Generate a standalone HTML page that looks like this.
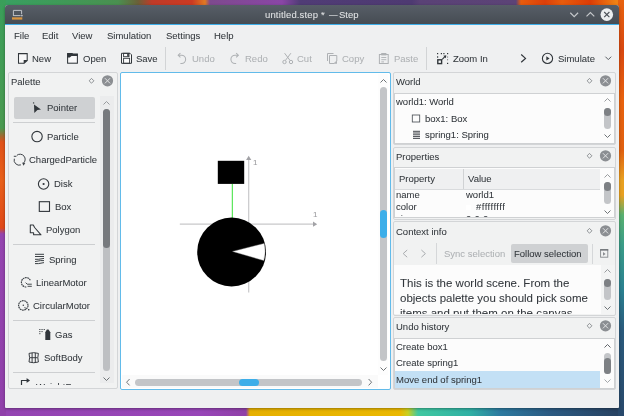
<!DOCTYPE html><html><head><meta charset="utf-8"><style>
html,body{margin:0;padding:0;width:624px;height:416px;overflow:hidden;background:#5a4378}
body{position:relative;font-family:"Liberation Sans",sans-serif}
.t{position:absolute;white-space:pre;line-height:0;font-family:"Liberation Sans",sans-serif;-webkit-font-smoothing:antialiased;will-change:transform;-webkit-text-stroke:0.05px currentColor}
svg{overflow:visible}
</style></head><body>
<div style="position:absolute;left:0px;top:0px;width:624px;height:6px;background:linear-gradient(to right,#38a062 0px,#3f9a58 60px,#4a9050 118px,#6a6038 138px,#c03a28 152px,#cc3a22 192px,#e07a22 205px,#7e4a8e 210px,#8a46a6 282px,#503c76 300px,#4e3a72 412px,#5a4276 420px,#5c4377 516px,#e85c0c 521px,#dc3f0a 545px,#e85c0c 562px,#dc3c06 590px,#f08214 616px)"></div>
<div style="position:absolute;left:0px;top:407px;width:624px;height:9px;background:linear-gradient(to right,#9444b2 0px,#9846b8 200px,#9040a8 246px,#e6b000 250px,#eab800 400px,#c8d020 408px,#40c8a0 418px,#2fb0a4 470px,#2c7aa0 500px,#2b5a82 550px,#27405f 624px)"></div>
<div style="position:absolute;left:0px;top:0px;width:6px;height:416px;background:linear-gradient(#3a9f5a 0px,#4a9a50 128px,#a06a30 136px,#e05018 142px,#e8601a 180px,#e04818 228px,#9444b0 234px,#9040aa 416px)"></div>
<div style="position:absolute;left:618px;top:0px;width:6px;height:416px;background:linear-gradient(#e8620e 0px,#d84810 50px,#e8620e 100px,#e06010 150px,#e8a020 180px,#e8a020 195px,#58b070 215px,#3a9c88 245px,#2a8090 290px,#2a5a7c 330px,#28486a 416px)"></div>
<div style="position:absolute;left:5px;top:5px;width:614px;height:403px;background:#eff0f1;border-radius:3px 3px 1px 1px;overflow:hidden;box-shadow:0 1px 3px rgba(0,0,0,.35)">
<div style="position:absolute;left:0;top:0;width:614px;height:19px;background:linear-gradient(#575e67,#464c53)"></div>
<div style="position:absolute;left:0;top:19px;width:614px;height:1px;background:#3daee9"></div>
</div>
<svg style="position:absolute;left:10px;top:8px;" width="15" height="14" viewBox="10 8 15 14"><path d="M13.4 16 V10.4 H21.6 V14.2 M13.4 15.6 H20.6" fill="none" stroke="#bfc2c6" stroke-width="1"/><circle cx="21.9" cy="15.6" r="0.9" fill="#bfc2c6"/><rect x="12" y="17.3" width="10.3" height="2.3" fill="#d89540"/></svg>
<div class="t" style="left:265.00px;top:15.00px;font-size:9.5px;color:#e2e4e6;letter-spacing:0.15px">untitled.step</div>
<div class="t" style="left:320.60px;top:15.00px;font-size:9.5px;color:#e2e4e6;">*</div>
<div class="t" style="left:328.60px;top:15.00px;font-size:9.5px;color:#e2e4e6;transform:scaleX(0.92);transform-origin:0 0">—</div>
<div class="t" style="left:339.30px;top:15.00px;font-size:9.5px;color:#e2e4e6;">Step</div>
<svg style="position:absolute;left:566px;top:8px;" width="54" height="14" viewBox="566 8 54 14"><polyline points="570.3,12.8 574.2,16.6 578.1,12.8" fill="none" stroke="#c5c8cb" stroke-width="1.2"/><polyline points="586.5,16.4 590.4,12.6 594.3,16.4" fill="none" stroke="#c5c8cb" stroke-width="1.2"/><circle cx="606.8" cy="14.6" r="6.3" fill="#eceeef"/><path d="M604.2 12 L609.4 17.2 M609.4 12 L604.2 17.2" stroke="#4b5157" stroke-width="1.1"/></svg>
<div class="t" style="left:14.40px;top:36.00px;font-size:9.5px;color:#31363b;">File</div>
<div class="t" style="left:42.00px;top:36.00px;font-size:9.5px;color:#31363b;">Edit</div>
<div class="t" style="left:72.40px;top:36.00px;font-size:9.5px;color:#31363b;">View</div>
<div class="t" style="left:107.00px;top:36.00px;font-size:9.5px;color:#31363b;">Simulation</div>
<div class="t" style="left:166.00px;top:36.00px;font-size:9.5px;color:#31363b;">Settings</div>
<div class="t" style="left:213.60px;top:36.00px;font-size:9.5px;color:#31363b;">Help</div>
<svg style="position:absolute;left:16px;top:51px;" width="14" height="15" viewBox="16 51 14 15"><path d="M18.5 53.6 H27.2 V60.4 L24.1 63.3 H18.5 Z" fill="#f8f8f9" stroke="#31363b" stroke-width="1.05"/><path d="M23.7 60.1 H27.6 L23.7 63.8 Z" fill="#31363b"/></svg>
<div class="t" style="left:32.30px;top:59.00px;font-size:9.5px;color:#31363b;">New</div>
<svg style="position:absolute;left:65px;top:51px;" width="15" height="15" viewBox="65 51 15 15"><rect x="67.6" y="54" width="9.8" height="9.2" fill="#f8f8f9" stroke="#31363b" stroke-width="1.05"/><path d="M67.1 53.1 H72.3 L73.1 54 H77.9 V55.9 H71.5 L69.8 57.6 H67.1 Z" fill="#31363b"/></svg>
<div class="t" style="left:82.90px;top:59.00px;font-size:9.5px;color:#31363b;">Open</div>
<svg style="position:absolute;left:119px;top:51px;" width="15" height="15" viewBox="119 51 15 15"><path d="M121.5 53.3 H130 L131.5 54.8 V63.3 H121.5 Z" fill="#fcfcfc" stroke="#31363b" stroke-width="1"/><rect x="123.6" y="53.3" width="5.4" height="3.4" fill="none" stroke="#31363b" stroke-width="0.9"/><rect x="127.2" y="53.6" width="1.6" height="2.8" fill="#31363b"/><rect x="123.6" y="58.3" width="6" height="5" fill="none" stroke="#31363b" stroke-width="0.9"/></svg>
<div class="t" style="left:136.10px;top:59.00px;font-size:9.5px;color:#31363b;">Save</div>
<div style="position:absolute;left:165px;top:47px;width:1px;height:23px;background:#d2d4d6"></div>
<svg style="position:absolute;left:175px;top:51px;" width="14" height="15" viewBox="175 51 14 15"><path d="M178.6 55.2 H181.5 A4.15 4.15 0 0 1 181.5 63.5 H180.4" fill="none" stroke="#aeb1b4" stroke-width="1.05"/><polyline points="180.4,53.1 178.2,55.2 180.4,57.3" fill="none" stroke="#aeb1b4" stroke-width="1.05"/></svg>
<div class="t" style="left:192.30px;top:59.00px;font-size:9.5px;color:#aeb1b4;">Undo</div>
<svg style="position:absolute;left:228px;top:51px;" width="14" height="15" viewBox="228 51 14 15"><path d="M238 55.2 H235.05 A4.15 4.15 0 0 0 235.05 63.5 H236.15" fill="none" stroke="#aeb1b4" stroke-width="1.05"/><polyline points="236.15,53.1 238.35,55.2 236.15,57.3" fill="none" stroke="#aeb1b4" stroke-width="1.05"/></svg>
<div class="t" style="left:245.20px;top:59.00px;font-size:9.5px;color:#aeb1b4;">Redo</div>
<svg style="position:absolute;left:280px;top:51px;" width="16" height="15" viewBox="280 51 16 15"><path d="M284.6 53.2 L290 60.4 M290.9 53.2 L285.4 60.4" stroke="#aeb1b4" stroke-width="1"/><circle cx="284.5" cy="62" r="1.7" fill="none" stroke="#aeb1b4" stroke-width="1"/><circle cx="291" cy="62" r="1.7" fill="none" stroke="#aeb1b4" stroke-width="1"/></svg>
<div class="t" style="left:297.40px;top:59.00px;font-size:9.5px;color:#aeb1b4;">Cut</div>
<svg style="position:absolute;left:325px;top:51px;" width="14" height="15" viewBox="325 51 14 15"><path d="M327.5 61 V53.5 H333.5" fill="none" stroke="#aeb1b4" stroke-width="1"/><path d="M329.5 55.5 H336.8 V61 L334 63.5 H329.5 Z" fill="none" stroke="#aeb1b4" stroke-width="1"/><path d="M337 60.8 V63.8 H334 Z" fill="#aeb1b4"/></svg>
<div class="t" style="left:342.40px;top:59.00px;font-size:9.5px;color:#aeb1b4;">Copy</div>
<svg style="position:absolute;left:377px;top:51px;" width="14" height="15" viewBox="377 51 14 15"><rect x="379.4" y="54.5" width="8.8" height="9" fill="none" stroke="#aeb1b4" stroke-width="1"/><rect x="381.2" y="53" width="5.2" height="2.4" fill="#aeb1b4"/><path d="M381.3 57.5 H386.3 M381.3 59.7 H386.3 M381.3 61.9 H384" stroke="#aeb1b4" stroke-width="0.9"/></svg>
<div class="t" style="left:393.60px;top:59.00px;font-size:9.5px;color:#aeb1b4;">Paste</div>
<div style="position:absolute;left:426px;top:47px;width:1px;height:23px;background:#d2d4d6"></div>
<svg style="position:absolute;left:435px;top:51px;" width="16" height="15" viewBox="435 51 16 15"><g fill="#31363b"><rect x="437" y="53" width="1.2" height="1.2"/><rect x="440.8" y="53" width="1.2" height="1.2"/><rect x="443.3" y="53" width="1.2" height="1.2"/><rect x="447" y="53" width="1.2" height="1.2"/><rect x="437" y="56.3" width="1.2" height="1.4"/><rect x="447" y="56.5" width="1.1" height="1.1" opacity=".6"/><rect x="447" y="59.2" width="1.1" height="1.1" opacity=".6"/><rect x="447" y="62.8" width="1.2" height="1.2"/><path d="M446.3 55.3 L445.9 58.3 L443.3 55.7 Z"/></g><rect x="437.8" y="59.8" width="3.8" height="3.8" fill="#f4f5f5" stroke="#31363b" stroke-width="1.4"/><path d="M442.2 59.4 L444.9 56.7" stroke="#31363b" stroke-width="1.1"/></svg>
<div class="t" style="left:453.20px;top:59.00px;font-size:9.5px;color:#31363b;">Zoom In</div>
<svg style="position:absolute;left:518px;top:52px;" width="10" height="12" viewBox="518 52 10 12"><polyline points="521.2,54.5 525.5,58.4 521.2,62.3" fill="none" stroke="#31363b" stroke-width="1.2"/></svg>
<svg style="position:absolute;left:540px;top:51px;" width="15" height="15" viewBox="540 51 15 15"><circle cx="547.5" cy="58.4" r="5.1" fill="none" stroke="#31363b" stroke-width="1.1"/><path d="M546.3 56.2 L549.6 58.4 L546.3 60.6 Z" fill="#31363b"/></svg>
<div class="t" style="left:557.80px;top:59.00px;font-size:9.5px;color:#31363b;">Simulate</div>
<svg style="position:absolute;left:603px;top:54px;" width="10" height="8" viewBox="603 54 10 8"><polyline points="605.4,56.7 608.3,59.6 611.2,56.7" fill="none" stroke="#5a5f64" stroke-width="1"/></svg>
<div style="position:absolute;left:8px;top:72px;width:108px;height:315px;border:1px solid #d3d5d7;border-radius:2px;background:#f1f2f2"></div>
<div class="t" style="left:11.40px;top:82.00px;font-size:9.5px;color:#31363b;">Palette</div>
<svg style="position:absolute;left:83px;top:73px;" width="34" height="16" viewBox="83 73 34 16"><path d="M91.5 78.39999999999999 L93.9 80.8 L91.5 83.2 L89.1 80.8 Z" fill="none" stroke="#7b7f83" stroke-width="0.85"/><circle cx="107.5" cy="80.8" r="5.6" fill="#8b8e92"/><path d="M104.9 78.2 L110.1 83.39999999999999 M110.1 78.2 L104.9 83.39999999999999" stroke="#e2e3e4" stroke-width="1"/></svg>
<div style="position:absolute;left:100px;top:96px;width:13.5px;height:287px;background:#ebeced"></div>
<div style="position:absolute;left:103px;top:109.4px;width:7px;height:261.6px;background:#bdbfc2;border-radius:3.5px"></div>
<div style="position:absolute;left:103px;top:109.4px;width:7px;height:138.2px;background:#76797d;border-radius:3.5px"></div>
<svg style="position:absolute;left:100px;top:100.4px;" width="13" height="6" viewBox="100 100.4 13 6"><polyline points="103.5,104.9 106.5,101.9 109.5,104.9" fill="none" stroke="#8d9194" stroke-width="0.9"/></svg>
<svg style="position:absolute;left:100px;top:375.8px;" width="13" height="6" viewBox="100 375.8 13 6"><polyline points="103.5,377.3 106.5,380.3 109.5,377.3" fill="none" stroke="#5f6468" stroke-width="0.9"/></svg>
<div style="position:absolute;left:14px;top:97px;width:81px;height:21.5px;background:#cfd1d3;border-radius:2px"></div>
<svg style="position:absolute;left:31px;top:100px;" width="12" height="15" viewBox="31 100 12 15"><circle cx="33.6" cy="102.9" r="0.7" fill="#31363b"/><path d="M34 104.4 L41 109.4 L37.4 109.9 L34.3 113 Z" fill="#31363b"/></svg>
<div class="t" style="left:46.60px;top:108.00px;font-size:9.5px;color:#31363b;">Pointer</div>
<div style="position:absolute;left:13px;top:122px;width:82px;height:1px;background:#cdcfd1"></div>
<div class="t" style="left:46.60px;top:137.00px;font-size:9.5px;color:#31363b;">Particle</div>
<svg style="position:absolute;left:29px;top:129px;" width="16" height="16" viewBox="29 129 16 16"><circle cx="37.05" cy="136.6" r="5.2" fill="none" stroke="#31363b" stroke-width="1.1"/></svg>
<div class="t" style="left:29.30px;top:160.00px;font-size:9.5px;color:#31363b;">ChargedParticle</div>
<svg style="position:absolute;left:11px;top:152px;" width="17" height="17" viewBox="11 152 17 17"><path d="M16.85 155.3 A5.1 5.1 0 0 1 23.2 163.4" fill="none" stroke="#3f4449" stroke-width="1"/><path d="M20.9 164.9 A5.1 5.1 0 0 1 14.3 158.7" fill="none" stroke="#3f4449" stroke-width="1"/><path d="M13.8 156.3 H16.4" stroke="#3f4449" stroke-width="1"/><path d="M22.3 162.6 L25.3 163.3 L23.3 165.7 Z" fill="#3f4449"/></svg>
<div class="t" style="left:54.30px;top:184.00px;font-size:9.5px;color:#31363b;">Disk</div>
<svg style="position:absolute;left:36px;top:177px;" width="16" height="16" viewBox="36 177 16 16"><circle cx="43.6" cy="184" r="5.2" fill="none" stroke="#31363b" stroke-width="1.1"/><circle cx="43.6" cy="184" r="1.1" fill="#31363b"/></svg>
<div class="t" style="left:55.00px;top:207.00px;font-size:9.5px;color:#31363b;">Box</div>
<svg style="position:absolute;left:37px;top:199px;" width="16" height="16" viewBox="37 199 16 16"><rect x="39.3" y="201.7" width="10.2" height="9.7" fill="none" stroke="#31363b" stroke-width="1.1"/></svg>
<div class="t" style="left:46.00px;top:230.00px;font-size:9.5px;color:#31363b;">Polygon</div>
<svg style="position:absolute;left:28px;top:223px;" width="16" height="16" viewBox="28 223 16 16"><path d="M30.3 225 H33.3 L34.6 227.5 L41 234.8 H33.6 V232.8 H30.3 Z" fill="none" stroke="#31363b" stroke-width="1.05" stroke-linejoin="round"/></svg>
<div style="position:absolute;left:13px;top:244px;width:82px;height:1px;background:#cdcfd1"></div>
<div class="t" style="left:48.90px;top:260.00px;font-size:9.5px;color:#31363b;">Spring</div>
<svg style="position:absolute;left:33px;top:252px;" width="14" height="14" viewBox="33 252 14 14"><path d="M35 254.3 H44 M35 256.5 H44 M35 259.3 H38.5 L44 258.4 M35 261.6 L40.5 260.6 H44 M35 263.6 H38.5 L44 262.6" fill="none" stroke="#3b4045" stroke-width="1"/></svg>
<div class="t" style="left:36.40px;top:283.00px;font-size:9.5px;color:#31363b;">LinearMotor</div>
<svg style="position:absolute;left:19px;top:276px;" width="16" height="14" viewBox="19 276 16 14"><path d="M30.3 280.2 A4.7 4.7 0 1 0 26.6 287" fill="none" stroke="#3b4045" stroke-width="1.15" stroke-dasharray="1.7 0.55"/><path d="M25.6 282.6 L27.2 284.2 H31.8 M27.6 286.3 H31.8" fill="none" stroke="#3b4045" stroke-width="0.95"/></svg>
<div class="t" style="left:33.10px;top:306.00px;font-size:9.5px;color:#31363b;">CircularMotor</div>
<svg style="position:absolute;left:16px;top:299px;" width="16" height="14" viewBox="16 299 16 14"><circle cx="23.3" cy="305.4" r="4.7" fill="none" stroke="#3b4045" stroke-width="1.15" stroke-dasharray="1.7 0.55"/><circle cx="23.3" cy="305.3" r="0.75" fill="#3b4045"/><path d="M24.3 307.6 L26.2 308.2" stroke="#3b4045" stroke-width="0.8"/><rect x="28" y="309" width="1.4" height="1.4" fill="#3b4045"/></svg>
<div style="position:absolute;left:13px;top:320px;width:82px;height:1px;background:#cdcfd1"></div>
<div class="t" style="left:54.70px;top:335.00px;font-size:9.5px;color:#31363b;">Gas</div>
<svg style="position:absolute;left:37px;top:327px;" width="15" height="15" viewBox="37 327 15 15"><path d="M46.9 329.4 H48.5 L50.3 332.2 V340 H45.3 V332.2 Z" fill="#31363b"/><path d="M39.3 329.5 H40.4 M41.5 329.5 H42.6 M43.7 329.5 H44.8 M39.3 331.6 H40.4 M41.5 331.6 H42.6 M39.3 333.7 H40.4" stroke="#31363b" stroke-width="1"/></svg>
<div class="t" style="left:43.50px;top:358.00px;font-size:9.5px;color:#31363b;">SoftBody</div>
<svg style="position:absolute;left:27px;top:351px;" width="14" height="14" viewBox="27 351 14 14"><path d="M29 353.4 Q33.7 351.9 38.4 353.4 Q37.2 357.7 38.4 362 Q33.7 363.5 29 362 Q30.2 357.7 29 353.4 Z M29.9 357.7 H37.5 M32.1 352.9 V362.6 M35.3 352.9 V362.6" fill="none" stroke="#31363b" stroke-width="0.95"/></svg>
<div style="position:absolute;left:13px;top:372px;width:82px;height:1px;background:#cdcfd1"></div>
<div style="position:absolute;left:9px;top:373px;width:91px;height:11.5px;overflow:hidden">
<svg style="position:absolute;left:0;top:0" width="91" height="11" viewBox="9 373 91 11"><path d="M21.5 385 V380.5 H28.5 M26.5 378.8 L29 380.5 L26.5 382.2" fill="none" stroke="#31363b" stroke-width="1.2"/></svg>
<div class="t" style="left:27px;top:14px;font-size:9.5px;color:#31363b">WeightForce</div>
</div>
<div style="position:absolute;left:120px;top:72px;width:269px;height:316px;border:1px solid #62bbea;border-radius:2px;background:#ffffff"></div>
<svg style="position:absolute;left:121px;top:73px;" width="268" height="316" viewBox="121 73 268 316"><path d="M179.8 224.2 H313.5" stroke="#c8c8ca" stroke-width="1.2"/><path d="M313 221.6 L317.2 224.2 L313 226.8 Z" fill="#a2a2a6"/><path d="M248.7 159.5 V292.6" stroke="#c8c8ca" stroke-width="1.2"/><path d="M246.1 160 L248.7 155.7 L251.3 160 Z" fill="#a2a2a6"/><rect x="217.8" y="160.8" width="26.4" height="23.1" fill="#000"/><path d="M232.3 184 V218.5" stroke="#22dd22" stroke-width="0.9"/><circle cx="231.6" cy="252" r="34.4" fill="#000"/><path d="M232.6 251.4 L264.2 243.4 A34.4 34.4 0 0 1 263.8 260.6 Z" fill="#fff" stroke="#999" stroke-width="0.4"/></svg>
<div class="t" style="left:253.20px;top:163.00px;font-size:8px;color:#9a9a9e;">1</div>
<div class="t" style="left:312.70px;top:215.00px;font-size:8px;color:#9a9a9e;">1</div>
<div style="position:absolute;left:378px;top:74px;width:10px;height:301px;background:#fdfdfd"></div>
<div style="position:absolute;left:122px;top:375px;width:256px;height:13px;background:#fafafa"></div>
<div style="position:absolute;left:380px;top:87px;width:7px;height:274.2px;background:#c3c5c8;border-radius:3.5px"></div>
<div style="position:absolute;left:380px;top:210.2px;width:7px;height:27.80000000000001px;background:#3daee9;border-radius:3.5px"></div>
<svg style="position:absolute;left:377px;top:77.5px;" width="13" height="6" viewBox="377 77.5 13 6"><polyline points="380.5,82.0 383.5,79.0 386.5,82.0" fill="none" stroke="#5f6468" stroke-width="0.9"/></svg>
<svg style="position:absolute;left:377px;top:366.2px;" width="13" height="6" viewBox="377 366.2 13 6"><polyline points="380.5,367.7 383.5,370.7 386.5,367.7" fill="none" stroke="#5f6468" stroke-width="0.9"/></svg>
<div style="position:absolute;left:134.6px;top:379px;width:227px;height:7px;background:#c3c5c8;border-radius:3.5px"></div>
<div style="position:absolute;left:238.8px;top:379px;width:20.2px;height:7px;background:#3daee9;border-radius:3.5px"></div>
<svg style="position:absolute;left:124px;top:377px;" width="8" height="11" viewBox="124 377 8 11"><polyline points="129.6,379 126.6,382.2 129.6,385.4" fill="none" stroke="#5f6468" stroke-width="0.9"/></svg>
<svg style="position:absolute;left:366px;top:377px;" width="8" height="11" viewBox="366 377 8 11"><polyline points="368.6,379 371.6,382.2 368.6,385.4" fill="none" stroke="#5f6468" stroke-width="0.9"/></svg>
<div style="position:absolute;left:393px;top:72px;width:221px;height:71px;border:1px solid #d3d5d7;border-radius:2px;background:#f1f2f2"></div>
<div class="t" style="left:396.40px;top:82.00px;font-size:9.5px;color:#31363b;">World</div>
<svg style="position:absolute;left:581px;top:72px;" width="34" height="16" viewBox="581 72 34 16"><path d="M589.5 78.39999999999999 L591.9 80.8 L589.5 83.2 L587.1 80.8 Z" fill="none" stroke="#7b7f83" stroke-width="0.85"/><circle cx="605.5" cy="80.8" r="5.6" fill="#8b8e92"/><path d="M602.9 78.2 L608.1 83.39999999999999 M608.1 78.2 L602.9 83.39999999999999" stroke="#e2e3e4" stroke-width="1"/></svg>
<div style="position:absolute;left:394px;top:93px;width:219px;height:49px;border:1px solid #cfd1d3;background:#fcfcfc"></div>
<div class="t" style="left:396.40px;top:102.00px;font-size:9.5px;color:#31363b;">world1: World</div>
<svg style="position:absolute;left:410px;top:113px;" width="12" height="11" viewBox="410 113 12 11"><rect x="412.3" y="115" width="7.4" height="7" fill="none" stroke="#4d5257" stroke-width="0.85"/></svg>
<div class="t" style="left:425.40px;top:119.00px;font-size:9.5px;color:#31363b;">box1: Box</div>
<svg style="position:absolute;left:410px;top:129px;" width="12" height="12" viewBox="410 129 12 12"><path d="M413 131.3 H420 M413 133 H420 M413 134.8 H420 M413 136.6 H420 M413 138.4 H420" stroke="#31363b" stroke-width="0.9"/></svg>
<div class="t" style="left:425.40px;top:135.00px;font-size:9.5px;color:#31363b;">spring1: Spring</div>
<div style="position:absolute;left:603.6px;top:107.5px;width:7px;height:21.19999999999999px;background:#c3c5c8;border-radius:3.5px"></div>
<div style="position:absolute;left:603.6px;top:107.5px;width:7px;height:8.299999999999997px;background:#7d8084;border-radius:3.5px"></div>
<svg style="position:absolute;left:600.6px;top:97.2px;" width="13" height="6" viewBox="600.6 97.2 13 6"><polyline points="604.1,101.7 607.1,98.7 610.1,101.7" fill="none" stroke="#8d9194" stroke-width="0.9"/></svg>
<svg style="position:absolute;left:600.6px;top:133.2px;" width="13" height="6" viewBox="600.6 133.2 13 6"><polyline points="604.1,134.7 607.1,137.7 610.1,134.7" fill="none" stroke="#5f6468" stroke-width="0.9"/></svg>
<div style="position:absolute;left:393px;top:147px;width:221px;height:71px;border:1px solid #d3d5d7;border-radius:2px;background:#f1f2f2"></div>
<div class="t" style="left:396.40px;top:157.00px;font-size:9.5px;color:#31363b;">Properties</div>
<svg style="position:absolute;left:581px;top:147px;" width="34" height="16" viewBox="581 147 34 16"><path d="M589.5 153.4 L591.9 155.8 L589.5 158.20000000000002 L587.1 155.8 Z" fill="none" stroke="#7b7f83" stroke-width="0.85"/><circle cx="605.5" cy="155.8" r="5.6" fill="#8b8e92"/><path d="M602.9 153.20000000000002 L608.1 158.4 M608.1 153.20000000000002 L602.9 158.4" stroke="#e2e3e4" stroke-width="1"/></svg>
<div style="position:absolute;left:394px;top:167px;width:219px;height:49px;border:1px solid #cfd1d3;background:#fcfcfc"></div>
<div style="position:absolute;left:395px;top:168.5px;width:205px;height:20px;background:#eff0f1;border-bottom:1px solid #d9dbdd"></div>
<div style="position:absolute;left:463px;top:168.5px;width:1px;height:20px;background:#d0d2d4"></div>
<div class="t" style="left:398.60px;top:179.00px;font-size:9.5px;color:#31363b;">Property</div>
<div class="t" style="left:467.60px;top:179.00px;font-size:9.5px;color:#31363b;">Value</div>
<div class="t" style="left:396.20px;top:195.00px;font-size:9.5px;color:#31363b;">name</div>
<div class="t" style="left:465.80px;top:195.00px;font-size:9.5px;color:#31363b;">world1</div>
<div class="t" style="left:396.20px;top:207.00px;font-size:9.5px;color:#31363b;">color</div>
<div style="position:absolute;left:466px;top:205px;width:5px;height:5px;background:#ffffff"></div>
<div class="t" style="left:475.60px;top:207.00px;font-size:9.5px;color:#31363b;letter-spacing:0.45px">#ffffffff</div>
<div style="position:absolute;left:395px;top:214px;width:205px;height:3.2px;overflow:hidden">
<div class="t" style="left:1.2px;top:5px;font-size:9.5px;color:#31363b">size</div>
<div class="t" style="left:70.5px;top:5px;font-size:9.5px;color:#31363b;letter-spacing:0.3px">0 0 0</div>
</div>
<div style="position:absolute;left:603.6px;top:182px;width:7px;height:21.80000000000001px;background:#c3c5c8;border-radius:3.5px"></div>
<div style="position:absolute;left:603.6px;top:182px;width:7px;height:8.5px;background:#7d8084;border-radius:3.5px"></div>
<svg style="position:absolute;left:600.6px;top:173.2px;" width="13" height="6" viewBox="600.6 173.2 13 6"><polyline points="604.1,177.7 607.1,174.7 610.1,177.7" fill="none" stroke="#8d9194" stroke-width="0.9"/></svg>
<svg style="position:absolute;left:600.6px;top:208.5px;" width="13" height="6" viewBox="600.6 208.5 13 6"><polyline points="604.1,210.0 607.1,213.0 610.1,210.0" fill="none" stroke="#5f6468" stroke-width="0.9"/></svg>
<div style="position:absolute;left:393px;top:221px;width:221px;height:93px;border:1px solid #d3d5d7;border-radius:2px;background:#f1f2f2"></div>
<div class="t" style="left:396.40px;top:232.00px;font-size:9.5px;color:#31363b;">Context info</div>
<svg style="position:absolute;left:581px;top:221px;" width="34" height="16" viewBox="581 221 34 16"><path d="M589.5 228.4 L591.9 230.8 L589.5 233.20000000000002 L587.1 230.8 Z" fill="none" stroke="#7b7f83" stroke-width="0.85"/><circle cx="605.5" cy="230.8" r="5.6" fill="#8b8e92"/><path d="M602.9 228.20000000000002 L608.1 233.4 M608.1 228.20000000000002 L602.9 233.4" stroke="#e2e3e4" stroke-width="1"/></svg>
<div style="position:absolute;left:394px;top:264.7px;width:220px;height:49.30000000000001px;background:#fcfcfc"></div>
<div style="position:absolute;left:601px;top:265px;width:13.5px;height:49px;background:#f3f4f4"></div>
<svg style="position:absolute;left:400px;top:246px;" width="30" height="16" viewBox="400 246 30 16"><polyline points="407.2,250 403.2,253.6 407.2,257.2" fill="none" stroke="#a9acaf" stroke-width="1"/><polyline points="421.4,250 425.4,253.6 421.4,257.2" fill="none" stroke="#a9acaf" stroke-width="1"/></svg>
<div style="position:absolute;left:436px;top:243px;width:1px;height:20.5px;background:#d5d7d9"></div>
<div class="t" style="left:444.30px;top:254.00px;font-size:9.5px;color:#aeb1b4;">Sync selection</div>
<div style="position:absolute;left:511px;top:244px;width:76.5px;height:18.5px;background:#cfd1d3;border-radius:2px"></div>
<div class="t" style="left:514.40px;top:254.00px;font-size:9.5px;color:#31363b;">Follow selection</div>
<div style="position:absolute;left:592px;top:243.5px;width:1px;height:20px;background:#d5d7d9"></div>
<svg style="position:absolute;left:598px;top:248px;" width="12" height="12" viewBox="598 248 12 12"><rect x="600.6" y="249.6" width="7.2" height="7.6" fill="none" stroke="#85888c" stroke-width="0.9"/><path d="M600.2 249.9 H608.2" stroke="#6f7377" stroke-width="1.4"/><path d="M603 252 L605.6 253.9 L603 255.8 Z" fill="#8a8d91"/></svg>
<div style="position:absolute;left:395px;top:265px;width:206px;height:48.5px;overflow:hidden">
<div class="t" style="left:5.3px;top:18px;font-size:11.5px;color:#31363b">This is the world scene. From the</div>
<div class="t" style="left:5.3px;top:33px;font-size:11.5px;color:#31363b">objects palette you should pick some</div>
<div class="t" style="left:5.3px;top:48px;font-size:11.5px;color:#31363b">items and put them on the canvas.</div>
</div>
<div style="position:absolute;left:603.6px;top:279.4px;width:7px;height:20.200000000000045px;background:#c3c5c8;border-radius:3.5px"></div>
<div style="position:absolute;left:603.6px;top:279.4px;width:7px;height:8.100000000000023px;background:#7d8084;border-radius:3.5px"></div>
<svg style="position:absolute;left:600.6px;top:268.2px;" width="13" height="6" viewBox="600.6 268.2 13 6"><polyline points="604.1,272.7 607.1,269.7 610.1,272.7" fill="none" stroke="#8d9194" stroke-width="0.9"/></svg>
<svg style="position:absolute;left:600.6px;top:305px;" width="13" height="6" viewBox="600.6 305 13 6"><polyline points="604.1,306.5 607.1,309.5 610.1,306.5" fill="none" stroke="#5f6468" stroke-width="0.9"/></svg>
<div style="position:absolute;left:393px;top:317px;width:221px;height:71px;border:1px solid #d3d5d7;border-radius:2px;background:#f1f2f2"></div>
<div class="t" style="left:396.40px;top:327.00px;font-size:9.5px;color:#31363b;">Undo history</div>
<svg style="position:absolute;left:581px;top:317px;" width="34" height="16" viewBox="581 317 34 16"><path d="M589.5 323.40000000000003 L591.9 325.8 L589.5 328.2 L587.1 325.8 Z" fill="none" stroke="#7b7f83" stroke-width="0.85"/><circle cx="605.5" cy="325.8" r="5.6" fill="#8b8e92"/><path d="M602.9 323.2 L608.1 328.40000000000003 M608.1 323.2 L602.9 328.40000000000003" stroke="#e2e3e4" stroke-width="1"/></svg>
<div style="position:absolute;left:394px;top:338px;width:219px;height:49px;border:1px solid #cfd1d3;background:#fcfcfc"></div>
<div class="t" style="left:396.20px;top:347.00px;font-size:9.5px;color:#31363b;">Create box1</div>
<div class="t" style="left:396.20px;top:363.00px;font-size:9.5px;color:#31363b;">Create spring1</div>
<div style="position:absolute;left:395px;top:371.3px;width:205px;height:17px;background:#c3e0f5"></div>
<div class="t" style="left:396.20px;top:380.00px;font-size:9.5px;color:#31363b;">Move end of spring1</div>
<div style="position:absolute;left:603.6px;top:352.8px;width:7px;height:20.899999999999977px;background:#c3c5c8;border-radius:3.5px"></div>
<div style="position:absolute;left:603.6px;top:358px;width:7px;height:15.699999999999989px;background:#7d8084;border-radius:3.5px"></div>
<svg style="position:absolute;left:600.6px;top:342.5px;" width="13" height="6" viewBox="600.6 342.5 13 6"><polyline points="604.1,347.0 607.1,344.0 610.1,347.0" fill="none" stroke="#4f5459" stroke-width="0.9"/></svg>
<svg style="position:absolute;left:600.6px;top:378px;" width="13" height="6" viewBox="600.6 378 13 6"><polyline points="604.1,379.5 607.1,382.5 610.1,379.5" fill="none" stroke="#9a9ea2" stroke-width="0.9"/></svg>
</body></html>
